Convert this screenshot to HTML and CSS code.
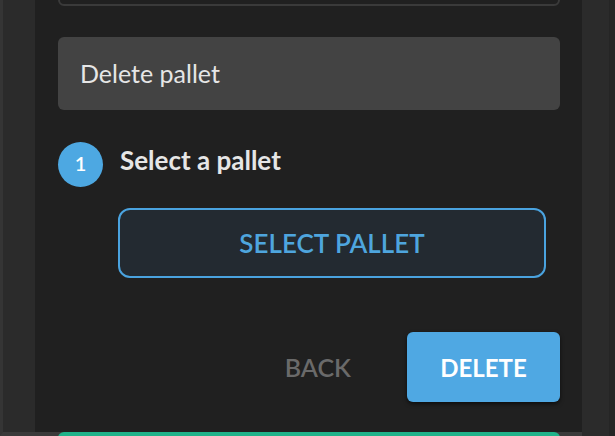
FILE: index.html
```html
<!DOCTYPE html>
<html>
<head>
<meta charset="utf-8">
<link rel="stylesheet" href="styles.css">
</head>
<body>
<div class="frame">
  <div class="side-left"></div>
  <div class="panel">
    <div class="prev-field"></div>
    <div class="title-box">Delete pallet</div>
    <div class="step">
      <div class="step-num">1</div>
      <div class="step-label">Select a pallet</div>
    </div>
    <div class="step-body">
      <button class="btn-outline">SELECT PALLET</button>
    </div>
    <div class="actions">
      <button class="btn-text">BACK</button>
      <button class="btn-primary">DELETE</button>
    </div>
    <div class="next-card"></div>
  </div>
  <div class="side-right"><div class="edge"></div></div>
</div>
</body>
</html>
```

FILE: styles.css
```css
html, body {
  margin: 0;
  padding: 0;
  width: 615px;
  height: 436px;
  overflow: hidden;
  background: #2b2b2b;
  font-family: Lato, "Noto Sans", sans-serif;
}

.frame {
  display: flex;
  height: 436px;
  overflow: hidden;
}

.side-left {
  width: 32px;
  flex: none;
  background: #2b2b2b;
  border-left: 3px solid #353535;
  border-bottom: 4px solid #3a3a3a;
}

.panel {
  width: 547px;
  flex: none;
  background: linear-gradient(#202020 432px, #3a3a3a 432px);
  padding: 0 22px 0 23px;
  box-sizing: border-box;
  display: flex;
  flex-direction: column;
  overflow: hidden;
}

.side-right {
  flex: 1;
  display: flex;
  justify-content: flex-end;
  background: #2b2b2b;
}

.side-right .edge {
  width: 6px;
  background: #252525;
}

.prev-field {
  height: 36px;
  margin-top: -34px;
  border: 2px solid #3a3a3a;
  border-radius: 6px;
  flex: none;
}

.title-box {
  margin-top: 31px;
  height: 73px;
  flex: none;
  background: #434343;
  border-radius: 6px;
  display: flex;
  align-items: center;
  padding: 0 0 2px 22px;
  color: #e6e6e6;
  font-size: 25px;
  box-sizing: border-box;
}

.step {
  margin-top: 32px;
  display: flex;
  align-items: center;
  gap: 17px;
}

.step-num {
  width: 45px;
  height: 45px;
  border-radius: 50%;
  background: #4da8e2;
  color: #fff;
  font-size: 20px;
  font-weight: 600;
  display: flex;
  align-items: center;
  justify-content: center;
  padding-bottom: 3px;
  box-sizing: border-box;
  flex: none;
}

.step-label {
  color: #e6e6e6;
  font-size: 26px;
  font-weight: 700;
  margin-top: -10px;
}

.step-body {
  margin-top: 21px;
  padding-left: 60px;
}

.btn-outline {
  width: 428px;
  height: 70px;
  border: 2px solid #4aa3df;
  border-radius: 12px;
  background: #232a31;
  color: #4ea5de;
  font-family: inherit;
  font-size: 26px;
  font-weight: 600;
  cursor: pointer;
}

.actions {
  margin-top: 54px;
  display: flex;
  justify-content: flex-end;
  align-items: center;
  gap: 40px;
}

.btn-text {
  background: none;
  border: none;
  color: #6a6a6a;
  font-family: inherit;
  font-size: 25px;
  font-weight: 600;
  padding: 0 16px;
}

.btn-primary {
  width: 153px;
  height: 70px;
  border: none;
  border-radius: 6px;
  background: #4fa8e3;
  color: #fff;
  font-family: inherit;
  font-size: 24px;
  font-weight: 700;
  box-shadow: 0 2px 4px rgba(0, 0, 0, 0.6);
}

.next-card {
  margin-top: 30px;
  height: 20px;
  flex: none;
  background: #20b38a;
  border-radius: 6px 6px 0 0;
}
```
